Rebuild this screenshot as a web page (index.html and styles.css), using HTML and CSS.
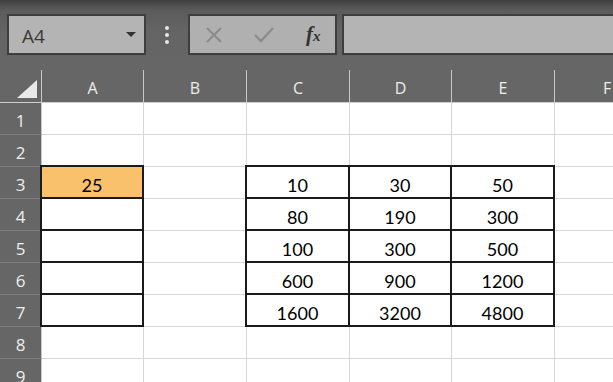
FILE: index.html
```html
<!DOCTYPE html>
<html lang="en">
<head>
  <meta charset="UTF-8">
  <title>Sheet</title>
  <link rel="stylesheet" href="styles.css">
</head>
<body>
  <div class="toolbar">
    <div class="name-box">
      <span class="name-text">A4</span>
      <span class="caret"></span>
    </div>
    <div class="grip"><i></i><i></i><i></i></div>
    <div class="fx-buttons">
      <svg class="ico" width="18" height="18" viewBox="0 0 18 18"><path d="M2 2 L16 16 M16 2 L2 16" stroke="#8c8c8c" stroke-width="2.2" fill="none"/></svg>
      <svg class="ico" width="22" height="18" viewBox="0 0 22 18"><path d="M2 9 L8 15 L20 2" stroke="#8c8c8c" stroke-width="2.4" fill="none"/></svg>
      <span class="fx">f<small>x</small></span>
    </div>
    <div class="formula"></div>
  </div>

  <div class="sheet" id="sheet">
    <div class="corner"><span class="tri"></span></div>
    <div class="col-head">A</div>
    <div class="col-head">B</div>
    <div class="col-head">C</div>
    <div class="col-head">D</div>
    <div class="col-head">E</div>
    <div class="col-head last">F</div>
    <!-- rows are inserted here -->
  </div>

  <script>
    // cell values: row -> [A, B, C, D, E, F]
    const values = {
      3: ['25', '', '10', '30', '50', ''],
      4: ['', '', '80', '190', '300', ''],
      5: ['', '', '100', '300', '500', ''],
      6: ['', '', '600', '900', '1200', ''],
      7: ['', '', '1600', '3200', '4800', '']
    };

    const sheet = document.getElementById('sheet');
    for (let r = 1; r <= 9; r++) {
      const head = document.createElement('div');
      head.className = 'row-head';
      head.textContent = r;
      sheet.appendChild(head);

      const vals = values[r] || ['', '', '', '', '', ''];
      for (let c = 0; c < 6; c++) {
        const cell = document.createElement('div');
        cell.className = 'cell';
        if (c === 5) cell.classList.add('last');
        const boxed = r >= 3 && r <= 7 && (c === 0 || (c >= 2 && c <= 4));
        if (boxed) cell.classList.add('boxed');
        if (r === 3 && c === 0) cell.classList.add('fill');
        cell.textContent = vals[c];
        sheet.appendChild(cell);
      }
    }
  </script>
</body>
</html>
```

FILE: styles.css
```css
body {
  margin: 0;
  padding: 0;
  width: 613px;
  height: 382px;
  overflow: hidden;
  background-color: #666;
  font-family: "Open Sans", "Liberation Sans", sans-serif;
}

.toolbar {
  height: 70px;
  box-sizing: border-box;
  padding: 14px 0 0 7px;
  display: flex;
  align-items: flex-start;
  background: linear-gradient(#3f3f3f 0px, #5b5b5b 10px, #646464 30px, #666 70px);
}

.name-box {
  width: 139px;
  height: 41px;
  box-sizing: border-box;
  border: 2px solid #3e3e3e;
  background-color: #b4b4b4;
  display: flex;
  align-items: center;
  padding: 2px 8px 0 13px;
}

.name-text {
  flex: 1;
  font-size: 19px;
  color: #3a3a3a;
}

.caret {
  width: 0;
  height: 0;
  margin-top: -2px;
  border-left: 5px solid transparent;
  border-right: 5px solid transparent;
  border-top: 5px solid #333;
}

.grip {
  width: 42px;
  height: 41px;
  display: flex;
  flex-direction: column;
  align-items: center;
  justify-content: center;
  gap: 3px;
}

.grip i {
  width: 4px;
  height: 4px;
  border-radius: 50%;
  background-color: #e6e6e6;
}

.fx-buttons {
  width: 149px;
  height: 41px;
  box-sizing: border-box;
  border: 2px solid #3e3e3e;
  background-color: #b0b0b0;
  display: flex;
  align-items: center;
  padding-left: 15px;
}

.ico {
  margin-right: 30px;
}

.fx-buttons .ico + .ico {
  margin-right: 31px;
}

.fx {
  font-family: "Liberation Serif", serif;
  font-style: italic;
  font-weight: bold;
  font-size: 21px;
  color: #333;
}

.fx small {
  font-size: 15px;
}

.formula {
  flex: 1;
  margin-left: 5px;
  height: 41px;
  box-sizing: border-box;
  border: 2px solid #3e3e3e;
  border-right: none;
  background-color: #b4b4b4;
}

.sheet {
  display: grid;
  grid-template-columns: 42px 102px 103px 103px 102px 103px 1fr;
  grid-template-rows: 33px repeat(9, 32px);
  background-color: #fff;
}

.corner,
.col-head,
.row-head {
  background-color: #666;
  color: #eee;
  box-sizing: border-box;
  display: flex;
  align-items: center;
  justify-content: center;
}

.corner {
  border-right: 1px solid #c8c8c8;
  border-bottom: 1px solid #cfcfcf;
  position: relative;
}

.tri {
  position: absolute;
  right: 4px;
  bottom: 4px;
  width: 0;
  height: 0;
  border-left: 20px solid transparent;
  border-bottom: 18px solid #e9e9e9;
}

.col-head {
  font-size: 16px;
  padding-top: 3px;
  border-right: 1px solid #c8c8c8;
  border-bottom: 1px solid #cfcfcf;
}

.col-head.last {
  border-right: none;
  justify-content: flex-start;
  padding-left: 48px;
}

.row-head {
  font-size: 17px;
  padding-top: 3px;
  border-right: 1px solid #c8c8c8;
  border-bottom: 1px solid #7c7c7c;
}

.cell {
  box-sizing: border-box;
  border-right: 1px solid #d6d6d6;
  border-bottom: 1px solid #d6d6d6;
  background-color: #fff;
  display: flex;
  align-items: center;
  justify-content: center;
  padding-top: 5px;
  font-family: "Lato", "Liberation Sans", sans-serif;
  font-size: 18px;
  color: #000;
}

.cell.last {
  border-right: none;
}

.cell.boxed {
  border-right: 2px solid #1a1a1a;
  border-bottom: 2px solid #1a1a1a;
  box-shadow: -1px -1px 0 1px #1a1a1a;
}

.cell.fill {
  background-color: #f9c16c;
}
```
